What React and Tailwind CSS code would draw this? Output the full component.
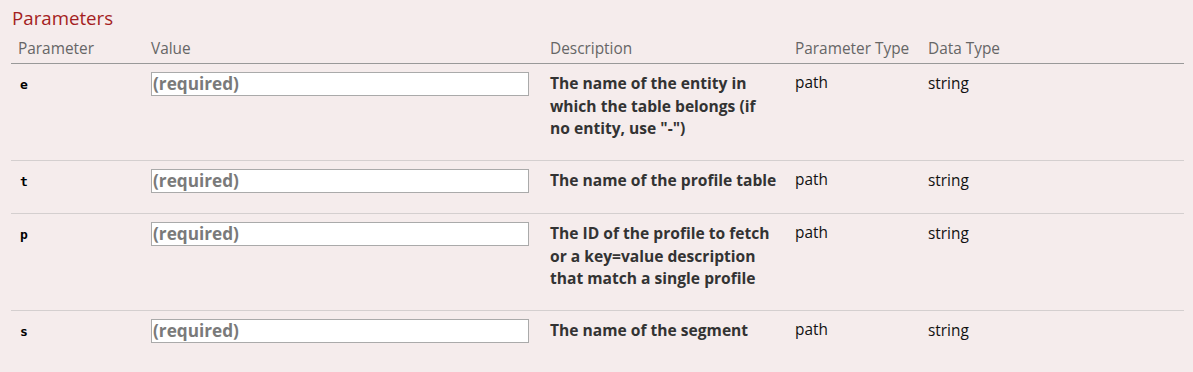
// App.jsx
const rows = [
    { name: 'e', desc: <>The name of the entity in which the table belongs (if<br />no entity, use "-")</> },
    { name: 't', desc: 'The name of the profile table' },
    { name: 'p', desc: 'The ID of the profile to fetch or a key=value description that match a single profile' },
    { name: 's', desc: 'The name of the segment' },
];

const cols = 'grid grid-cols-[132px_400px_245px_133px_1fr]';

export default function App() {
    return (
        <div className="min-h-[372px] bg-[#f5ecec] pl-[11px] pr-[9px] pt-[5px] font-['Open_Sans','Noto_Sans',sans-serif]">
            <h4 className="pl-[1px] text-[18.7px] leading-[26px] text-[#a41e22]">Parameters</h4>

            <div className={`${cols} mt-[7px] border-b border-[#999] pb-[4px] pt-[1px] text-[15.4px] leading-[20px] text-[#666]`}>
                <div className="pl-[7px]">Parameter</div>
                <div className="pl-[8px]">Value</div>
                <div className="pl-[7px]">Description</div>
                <div className="pl-[7px]">Parameter Type</div>
                <div className="pl-[7px]">Data Type</div>
            </div>

            {rows.map((row, i) => (
                <div
                    key={row.name}
                    className={`${cols} pt-[8px] pb-[20.5px] ${i < rows.length - 1 ? 'border-b border-[#d4cfcf]' : ''}`}
                >
                    <div className="pl-[9px] pt-[3px] font-['DejaVu_Sans_Mono',monospace] text-[13px] font-bold leading-[20px] text-black">
                        {row.name}
                    </div>
                    <div className="h-[22px] pl-[8px] pr-[14px]">
                        <input
                            className="h-[24px] w-[378px] border border-[#aaa] bg-white px-[1px] text-[17.2px] font-bold text-[#333] outline-none placeholder:text-[#7a7a7a]"
                            placeholder="(required)"
                        />
                    </div>
                    <div className="pl-[7px] pr-[8px] text-[15.6px] font-bold leading-[22.5px] text-[#333]">{row.desc}</div>
                    <div className="pl-[7px] text-[15.4px] leading-[22.5px] text-[#111]">path</div>
                    <div className="pl-[7px] pt-[1px] text-[15.4px] leading-[22.5px] text-[#111]">string</div>
                </div>
            ))}
        </div>
    );
}
